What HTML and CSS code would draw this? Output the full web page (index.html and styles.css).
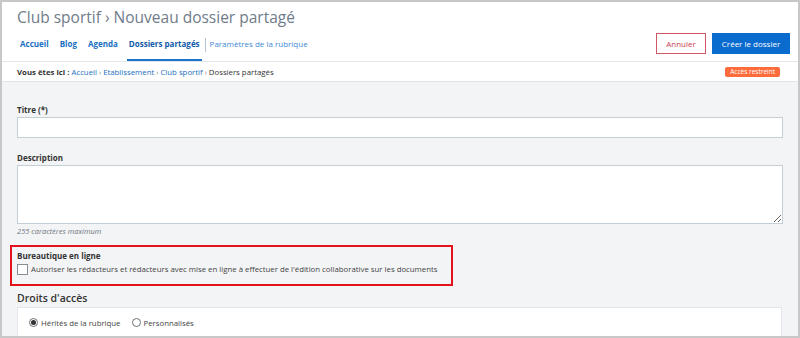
FILE: index.html
```html
<!DOCTYPE html>
<html lang="fr">
<head>
    <meta charset="UTF-8">
    <meta name="viewport" content="width=device-width, initial-scale=1.0">
    <title>Nouveau dossier partagé</title>
    <link rel="stylesheet" href="styles.css">
</head>
<body>
    <div class="frame">
        <header class="page-header">
            <h1>Club sportif › Nouveau dossier partagé</h1>
            <div class="tab-row">
                <nav class="tabs">
                    <a href="#" class="tab">Accueil</a>
                    <a href="#" class="tab">Blog</a>
                    <a href="#" class="tab">Agenda</a>
                    <a href="#" class="tab active">Dossiers partagés</a>
                    <span class="tab-sep"></span>
                    <a href="#" class="tab light">Paramètres de la rubrique</a>
                </nav>
                <div class="actions">
                    <button class="btn btn-cancel">Annuler</button>
                    <button class="btn btn-primary">Créer le dossier</button>
                </div>
            </div>
        </header>

        <div class="breadcrumb">
            <div class="crumbs">
                <strong>Vous êtes ici :</strong>
                <a href="#">Accueil</a> <span class="sep">›</span>
                <a href="#">Etablissement</a> <span class="sep">›</span>
                <a href="#">Club sportif</a> <span class="sep">›</span>
                <span>Dossiers partagés</span>
            </div>
            <span class="badge">Accès restreint</span>
        </div>

        <main class="content">
            <div class="field">
                <label class="label">Titre (*)</label>
                <input type="text" class="input">
            </div>

            <div class="field">
                <label class="label">Description</label>
                <textarea class="textarea"></textarea>
                <div class="hint">255 caractères maximum</div>
            </div>

            <div class="highlight">
                <div class="label">Bureautique en ligne</div>
                <label class="check">
                    <span class="checkbox"></span>
                    Autoriser les rédacteurs et rédacteurs avec mise en ligne à effectuer de l'édition collaborative sur les documents
                </label>
            </div>

            <h2>Droits d'accès</h2>
            <div class="panel">
                <label class="radio-item"><span class="radio checked"></span>Hérités de la rubrique</label>
                <label class="radio-item"><span class="radio"></span>Personnalisés</label>
            </div>
        </main>
    </div>
</body>
</html>
```

FILE: styles.css
```css
* {
    box-sizing: border-box;
}

body {
    margin: 0;
    font-family: 'Open Sans', sans-serif;
    color: #333;
}

.frame {
    height: 338px;
    border: 2px solid #c8c8c8;
    background-color: #f3f4f6;
    overflow: hidden;
}

.page-header {
    background-color: #fff;
    padding: 4px 8px 0 15px;
    border-bottom: 1px solid #e3e6ea;
}

h1 {
    margin: 0;
    font-size: 15.5px;
    line-height: 22px;
    font-weight: 400;
    color: #6f7c89;
}

.tab-row {
    display: flex;
    justify-content: space-between;
    align-items: flex-end;
}

.tabs {
    display: flex;
    align-items: center;
    gap: 11px;
    padding-left: 3px;
}

.tab {
    font-size: 8px;
    font-weight: 700;
    color: #1b6fc2;
    text-decoration: none;
    line-height: 12px;
    padding: 10px 0 9px;
    border-bottom: 2px solid transparent;
}

.tab.active {
    color: #0f5aa8;
    border-bottom-color: #1b75d0;
    margin: 0 -2px;
    padding-left: 2px;
    padding-right: 2px;
}

.tab.light {
    font-weight: 400;
    color: #3f8ad6;
    margin-left: -7px;
}

.tab-sep {
    width: 1px;
    height: 14px;
    background-color: #b5c4d3;
    margin: 0 0 0 -6px;
}

.actions {
    display: flex;
    gap: 6px;
    margin-bottom: 7px;
}

.btn {
    font-family: 'Open Sans', sans-serif;
    font-size: 8px;
    height: 21px;
    padding: 0;
    white-space: nowrap;
    cursor: pointer;
}

.btn-cancel {
    background-color: #fff;
    color: #c9404e;
    border: 1px solid #cf5664;
    width: 50px;
}

.btn-primary {
    background-color: #0a6bcf;
    color: #fff;
    border: 1px solid #0a6bcf;
    width: 78px;
}

.breadcrumb {
    display: flex;
    justify-content: space-between;
    align-items: center;
    background-color: #fff;
    height: 20px;
    padding: 0 18px 0 15px;
    border-bottom: 1px solid #e1e4e8;
    font-size: 7.8px;
}

.crumbs strong {
    font-weight: 700;
    color: #333;
}

.crumbs a {
    color: #1b6fc2;
    text-decoration: none;
}

.crumbs .sep {
    color: #777;
    font-size: 7px;
}

.badge {
    background-color: #ff6b3b;
    color: #fff;
    font-size: 6.5px;
    line-height: 10px;
    padding: 0 5px;
    border-radius: 2px;
}

.content {
    padding: 22px 15px 0;
}

.field {
    margin-bottom: 14px;
}

.label {
    display: block;
    font-size: 8px;
    line-height: 11px;
    font-weight: 700;
    color: #333;
    margin-bottom: 2px;
}

.input,
.textarea {
    display: block;
    width: 100%;
    border: 1px solid #c3ced5;
    background-color: #fff;
    font-family: 'Open Sans', sans-serif;
}

.input {
    height: 21px;
}

.textarea {
    height: 59px;
    resize: vertical;
}

.hint {
    font-size: 7.5px;
    line-height: 10px;
    font-style: italic;
    color: #6e7780;
    margin-top: 2px;
}

.highlight {
    width: fit-content;
    margin: -5px 0 0 -7px;
    padding: 3px 13px 9px 5px;
    border: 2px solid #e3121c;
}

.check {
    display: flex;
    align-items: center;
    gap: 3px;
    height: 12px;
    font-size: 7.8px;
    color: #444;
}

.checkbox {
    width: 11px;
    height: 11px;
    border: 1px solid #8a8f95;
    background-color: #fff;
}

h2 {
    margin: 4px 0 1px;
    font-size: 10.5px;
    line-height: 16px;
    font-weight: 600;
    color: #333;
}

.panel {
    display: flex;
    gap: 11px;
    background-color: #fff;
    border: 1px solid #e3e6ea;
    height: 40px;
    margin-right: 1px;
    padding: 9px 11px;
}

.radio-item {
    display: flex;
    align-items: center;
    gap: 3px;
    font-size: 7.8px;
    color: #444;
    height: 11px;
}

.radio {
    width: 9px;
    height: 9px;
    border: 1px solid #6d737a;
    border-radius: 50%;
    display: flex;
    align-items: center;
    justify-content: center;
}

.radio.checked::after {
    content: "";
    width: 5px;
    height: 5px;
    border-radius: 50%;
    background-color: #333;
}
```
